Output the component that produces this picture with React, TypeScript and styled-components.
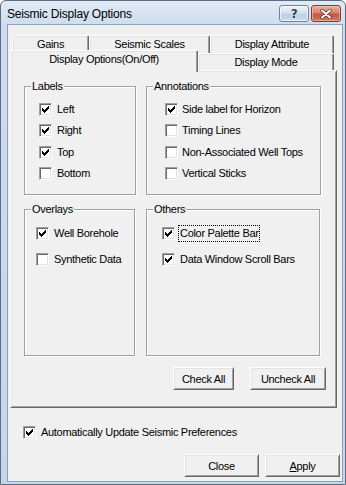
import { ReactNode } from 'react';
import styled, { createGlobalStyle, css } from 'styled-components';

const GlobalStyle = createGlobalStyle`
  html, body {
    margin: 0;
    padding: 0;
    background: #ffffff;
  }
  body {
    font-family: "Liberation Sans", Arial, sans-serif;
    font-size: 11px;
    letter-spacing: -0.3px;
    color: #000;
  }
`;

const Window = styled.div`
  width: 346px;
  height: 485px;
  box-sizing: border-box;
  display: flex;
  flex-direction: column;
  border: 1px solid #5d6c7e;
  border-radius: 6px 6px 0 0;
  background: linear-gradient(#e2ebf6, #cddcee 24px, #c6d7eb);
`;

const TitleBar = styled.div`
  height: 23px;
  display: flex;
  align-items: flex-start;
  padding: 0 4px 0 6px;
`;

const Caption = styled.span`
  font-size: 12px;
  letter-spacing: -0.2px;
  line-height: 14px;
  margin-top: 6px;
  color: #000;
`;

const CaptionButtons = styled.div`
  margin-left: auto;
  margin-top: 4px;
  display: flex;
  gap: 2px;
`;

const CaptionButton = styled.div<{ $close?: boolean }>(({ $close }) => css`
  width: 30px;
  height: 17px;
  box-sizing: border-box;
  display: flex;
  align-items: center;
  justify-content: center;
  border: 1px solid ${$close ? '#7c3c34' : '#6f8299'};
  border-radius: 3px;
  box-shadow: inset 0 0 0 1px ${$close ? 'rgba(255,200,190,0.6)' : 'rgba(255,255,255,0.7)'};
  background: ${$close
    ? 'linear-gradient(#eab0a2, #d6806d 48%, #c25440 52%, #d27865)'
    : 'linear-gradient(#edf3fa, #d3e0ef 48%, #bfd0e5 52%, #cbd9eb)'};
`);

const HelpGlyph = styled.span`
  font-family: "DejaVu Sans", sans-serif;
  font-weight: bold;
  font-size: 12px;
  line-height: 12px;
  color: #2e3a48;
  text-shadow: 0 0 1px #fff, 0 0 1px #fff;
`;

const Client = styled.div`
  flex: 1;
  margin: 0 2px 2px 6px;
  border: 1px solid #8ba0b9;
  background: #f0f0f0;
  display: flex;
  flex-direction: column;
`;

const TabRow = styled.div<{ $top: number; $left: number }>(({ $top, $left }) => css`
  display: flex;
  align-items: flex-end;
  margin-top: ${$top}px;
  padding-left: ${$left}px;
`);

const Tab = styled.div<{ $w: number; $h: number; $active?: boolean }>(({ $w, $h, $active }) => css`
  width: ${$w}px;
  height: ${$h}px;
  box-sizing: border-box;
  padding-top: 2px;
  line-height: 13px;
  text-align: center;
  white-space: nowrap;
  background: #f0f0f0;
  border-top: 1px solid #fff;
  border-left: 1px solid #fff;
  border-right: 1px solid #696969;
  border-radius: 2px 2px 0 0;
  box-shadow: inset -1px 0 #a0a0a0, inset 1px 1px #e3e3e3;
  ${$active && css`
    position: relative;
    z-index: 1;
  `}
`);

const Panel = styled.div`
  width: 327px;
  margin: -2px 0 0 2px;
  box-sizing: border-box;
  padding: 9px 10px 17px 13px;
  background: #f0f0f0;
  border: 1px solid;
  border-color: #fff #696969 #696969 #fff;
  box-shadow: inset 1px 1px #e3e3e3, inset -1px -1px #a0a0a0;
  display: flex;
  flex-direction: column;
`;

const GroupGrid = styled.div`
  display: grid;
  grid-template-columns: 112px 175px;
  grid-template-rows: 115px 153px;
  column-gap: 10px;
  row-gap: 8px;
`;

const Group = styled.fieldset<{ $w: number }>(({ $w }) => css`
  width: ${$w}px;
  min-width: 0;
  margin: 0;
  padding: 0;
  box-sizing: border-box;
  border: 1px solid #a0a0a0;
  box-shadow: inset 1px 1px #fff, 1px 1px #fff;
`);

const GroupTitle = styled.legend`
  margin-left: 6px;
  padding: 0 1px;
  line-height: 13px;
  background: #f0f0f0;
`;

const OptionList = styled.div<{ $top: number; $indent: number; $gap: number }>(({ $top, $indent, $gap }) => css`
  display: flex;
  flex-direction: column;
  gap: ${$gap}px;
  padding: ${$top}px 0 0 ${$indent}px;
`);

const Option = styled.label<{ $gap?: number }>(({ $gap = 5 }) => css`
  display: flex;
  align-items: center;
  gap: ${$gap}px;
  height: 13px;
  line-height: 13px;
  white-space: nowrap;
`);

const Box = styled.span`
  flex: none;
  width: 13px;
  height: 13px;
  box-sizing: border-box;
  border: 1px solid;
  border-color: #a0a0a0 #fff #fff #a0a0a0;
  box-shadow: inset 1px 1px #696969, inset -1px -1px #e3e3e3;
  background: #fff;

  svg {
    display: block;
    margin: 2px 0 0 2px;
  }
`;

const FocusText = styled.span`
  padding: 1px 0 2px 1px;
  margin: -1px 0 -2px -1px;
  outline: 1px dotted #000;
`;

const PanelActions = styled.div`
  display: flex;
  justify-content: flex-end;
  gap: 16px;
  margin-top: 11px;
`;

const PushButton = styled.button<{ $w: number }>(({ $w }) => css`
  width: ${$w}px;
  height: 23px;
  box-sizing: border-box;
  padding: 0;
  font: inherit;
  letter-spacing: inherit;
  color: #000;
  background: #f0f0f0;
  border: 1px solid;
  border-color: #fff #696969 #696969 #fff;
  box-shadow: inset 1px 1px #e3e3e3, inset -1px -1px #a0a0a0;
  border-radius: 0;
`);

const AutoRow = styled.div`
  margin-top: 18px;
  padding-left: 15px;
`;

const DialogActions = styled.div`
  display: flex;
  justify-content: flex-end;
  gap: 6px;
  margin-top: 15px;
  padding-right: 2px;
`;

function CheckMark() {
  return (
    <svg width="7" height="7" viewBox="0 0 7 7" shapeRendering="crispEdges">
      <path
        d="M0 2h1v1h1v1h1v-1h1v-1h1v-1h1v-1h1v3h-1v1h-1v1h-1v1h-1v1h-1v-1h-1v-1h-1z"
        fill="#000"
      />
    </svg>
  );
}

function CheckBox({ checked, children, gap }: { checked: boolean; children: ReactNode; gap?: number }) {
  return (
    <Option $gap={gap}>
      <Box>{checked && <CheckMark />}</Box>
      <span>{children}</span>
    </Option>
  );
}

type Item = { label: string; checked: boolean; focus?: boolean };

type GroupDef = {
  title: string;
  w: number;
  top: number;
  indent: number;
  gap: number;
  textGap: number;
  items: Item[];
};

const groups: GroupDef[] = [
  {
    title: 'Labels', w: 112, top: 10, indent: 14, gap: 8.33, textGap: 5,
    items: [
      { label: 'Left', checked: true },
      { label: 'Right', checked: true },
      { label: 'Top', checked: true },
      { label: 'Bottom', checked: false },
    ],
  },
  {
    title: 'Annotations', w: 175, top: 10, indent: 18, gap: 8.33, textGap: 4,
    items: [
      { label: 'Side label for Horizon', checked: true },
      { label: 'Timing Lines', checked: false },
      { label: 'Non-Associated Well Tops', checked: false },
      { label: 'Vertical Sticks', checked: false },
    ],
  },
  {
    title: 'Overlays', w: 111, top: 11, indent: 11, gap: 13, textGap: 5,
    items: [
      { label: 'Well Borehole', checked: true },
      { label: 'Synthetic Data', checked: false },
    ],
  },
  {
    title: 'Others', w: 174, top: 11, indent: 15, gap: 13, textGap: 5,
    items: [
      { label: 'Color Palette Bar', checked: true, focus: true },
      { label: 'Data Window Scroll Bars', checked: true },
    ],
  },
];

function CloseGlyph() {
  return (
    <svg width="12" height="10" viewBox="0 0 12 10">
      <path d="M2 1.5 L10 8.5 M10 1.5 L2 8.5" stroke="#5a2520" strokeWidth="3.4" strokeLinecap="round" />
      <path d="M2 1.5 L10 8.5 M10 1.5 L2 8.5" stroke="#fff" strokeWidth="2" strokeLinecap="round" />
    </svg>
  );
}

export default function App() {
  return (
    <>
      <GlobalStyle />
      <Window>
        <TitleBar>
          <Caption>Seismic Display Options</Caption>
          <CaptionButtons>
            <CaptionButton><HelpGlyph>?</HelpGlyph></CaptionButton>
            <CaptionButton $close><CloseGlyph /></CaptionButton>
          </CaptionButtons>
        </TitleBar>
        <Client>
          <TabRow $top={10} $left={4}>
            <Tab $w={77} $h={18}>Gains</Tab>
            <Tab $w={121} $h={18}>Seismic Scales</Tab>
            <Tab $w={124} $h={18}>Display Attribute</Tab>
          </TabRow>
          <TabRow $top={-3} $left={2}>
            <Tab $w={188} $h={22} $active>Display Options(On/Off)</Tab>
            <Tab $w={136} $h={19}>Display Mode</Tab>
          </TabRow>
          <Panel>
            <GroupGrid>
              {groups.map((g) => (
                <Group key={g.title} $w={g.w}>
                  <GroupTitle>{g.title}</GroupTitle>
                  <OptionList $top={g.top} $indent={g.indent} $gap={g.gap}>
                    {g.items.map((it) => (
                      <CheckBox key={it.label} checked={it.checked} gap={g.textGap}>
                        {it.focus ? <FocusText>{it.label}</FocusText> : it.label}
                      </CheckBox>
                    ))}
                  </OptionList>
                </Group>
              ))}
            </GroupGrid>
            <PanelActions>
              <PushButton $w={61}>Check All</PushButton>
              <PushButton $w={76}>Uncheck All</PushButton>
            </PanelActions>
          </Panel>
          <AutoRow>
            <CheckBox checked>Automatically Update Seismic Preferences</CheckBox>
          </AutoRow>
          <DialogActions>
            <PushButton $w={75}>Close</PushButton>
            <PushButton $w={75}><u>A</u>pply</PushButton>
          </DialogActions>
        </Client>
      </Window>
    </>
  );
}
